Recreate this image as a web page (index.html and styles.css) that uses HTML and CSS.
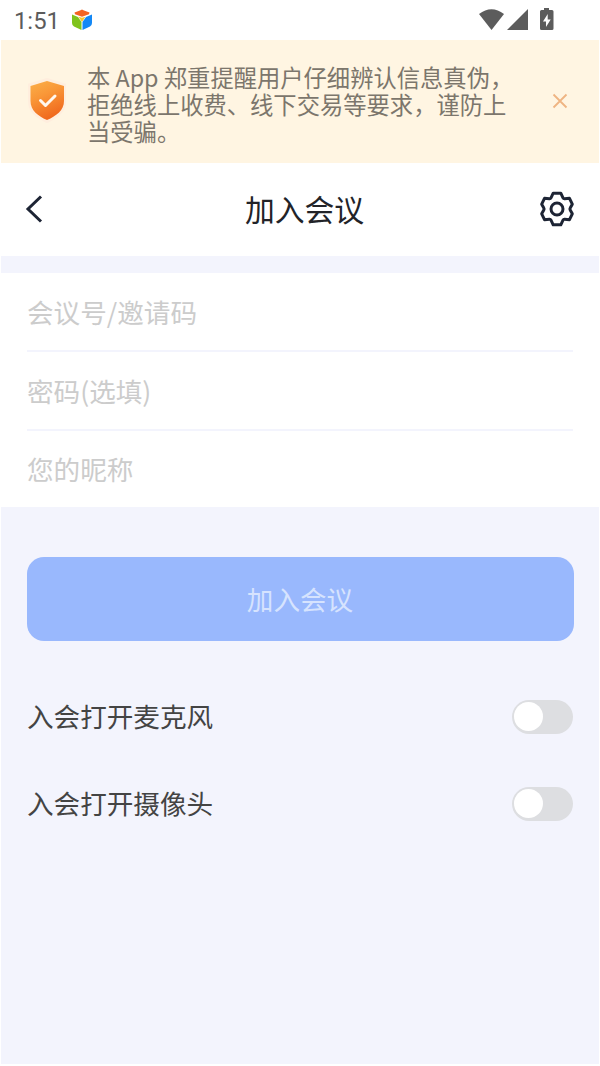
FILE: index.html
```html
<!DOCTYPE html>
<html lang="zh-CN">
<head>
<meta charset="utf-8">
<title>加入会议</title>
<link rel="stylesheet" href="styles.css">
</head>
<body>
<div class="screen">
  <header class="status">
    <span class="clock">1:51</span>
    <svg class="cube" width="22" height="22" viewBox="0 0 22 22">
      <path d="M3.500 3.500 9 1.500 11 .5l2 1 5.500 2L18 5.200 11 7.800 4 5.200Z" fill="#f26322"/>
      <path d="M7.500 7.700 11 8.800l3.500-1.100L11 13Z" fill="#fcc42c"/>
      <path d="M1 5.500 7 8l3.500 5v8L3 17.500Q1 16.500 1 14Z" fill="#7fc31c"/>
      <path d="M21 5.500 15 8l-3.500 5v8L19 17.500Q21 16.500 21 14Z" fill="#1388f5"/>
    </svg>
    <svg class="signals" width="76" height="24" viewBox="0 0 76 24">
      <path d="M0 6Q12.500-3.500 25 6L12.500 22Z"/>
      <path d="M28 22 49 1v21Z"/>
      <path fill-rule="evenodd" d="M65 0h5v2h3q1.500 0 1.500 1.500v17q0 1.500-1.500 1.500H62.500q-1.500 0-1.500-1.500v-17Q61 2 62.500 2H65ZM68.700 6 64 13.500h3V19l4.700-7.500h-3Z"/>
    </svg>
  </header>

  <section class="notice">
    <svg class="shield" width="42" height="50" viewBox="0 0 42 50">
      <defs><linearGradient id="shield-fill" x1="0" y1="0" x2=".4" y2="1"><stop stop-color="#fbb04a"/><stop offset=".45" stop-color="#f99637"/><stop offset="1" stop-color="#f06a1e"/></linearGradient></defs>
      <path d="M21 3 39 8.500v17C39 35.500 31 41.500 21 46 11 41.500 3 35.500 3 25.500v-17Z" fill="#ffeede" stroke="#ffeede" stroke-width="2" stroke-linejoin="round"/>
      <path d="M21 5 38 10v15c0 9-7.500 15-17 19C11.500 40 4.500 34 4.500 25V10Z" fill="url(#shield-fill)"/>
      <path d="m14.500 24.500 5 5 9.500-9.500" fill="none" stroke="#fff8ef" stroke-width="3" stroke-linecap="round" stroke-linejoin="round"/>
    </svg>
    <p class="notice-text">本 App 郑重提醒用户仔细辨认信息真伪，<br>拒绝线上收费、线下交易等要求，谨防上<br>当受骗。</p>
    <svg class="close" width="16" height="16" viewBox="0 0 16 16"><path d="m1.500 1.500 13 13m0-13-13 13"/></svg>
  </section>

  <nav class="titlebar">
    <svg class="line-icon" width="20" height="28" viewBox="0 0 20 28"><path d="M16 1.500 3 14l13 12.500"/></svg>
    <h1 class="title">加入会议</h1>
    <svg class="line-icon" width="36" height="36" viewBox="0 0 36 36">
      <path stroke-linejoin="round" d="M14.200 2.200h7.600L24 6.800Q24.500 7.800 25.600 7.700L30.500 7.300 33.300 13.200 31.200 17Q30.600 18 31.200 19L33.300 22.800 30.500 28.700 25.600 28.300Q24.500 28.200 24 29.200L21.800 33.800H14.200L12 29.200Q11.500 28.200 10.400 28.300L5.500 28.700 2.700 22.800 4.800 19Q5.400 18 4.800 17L2.700 13.200 5.500 7.300 10.400 7.700Q11.500 7.800 12 6.800Z"/>
      <circle cx="18" cy="18" r="6"/>
    </svg>
  </nav>

  <main class="content">
    <div class="fields">
      <div class="field">会议号/邀请码</div>
      <div class="field">密码(选填)</div>
      <div class="field">您的昵称</div>
    </div>
    <button class="join">加入会议</button>
    <div class="option"><span>入会打开麦克风</span><span class="switch"></span></div>
    <div class="option"><span>入会打开摄像头</span><span class="switch"></span></div>
  </main>
</div>
</body>
</html>
```
FILE: styles.css
```css
* { box-sizing: border-box; }
body { margin: 0; background: #fff; }
.screen {
  display: flex;
  flex-direction: column;
  width: 600px;
  height: 1066px;
  padding: 0 1px 2px;
  font-family: "Noto Sans", "Noto Sans CJK SC", sans-serif;
}
.status { display: flex; align-items: center; height: 40px; padding: 0 44px 0 13px; }
.clock { width: 57px; font: 400 23.800px/40px Roboto, sans-serif; color: #5c5c5c; padding-top: 2px; }
.signals { margin-left: auto; fill: #5c5c5c; }
.notice { display: flex; align-items: center; height: 123px; padding: 0 31px 2px 25px; background: #fff5e2; }
.notice-text { margin: 0 0 0 19px; padding-top: 7px; font: 400 23.300px/27px "Noto Sans CJK SC", sans-serif; color: #7c766c; white-space: nowrap; }
.close { margin-left: auto; fill: none; stroke: #efb482; stroke-width: 1.800; }
.titlebar { display: flex; align-items: center; justify-content: space-between; height: 93px; padding: 0 24px 2px; }
.title { margin: 0 0 0 25px; padding-bottom: 2px; font: 400 29.800px/44px "Noto Sans CJK SC", sans-serif; color: #222328; }
.line-icon { fill: none; stroke: #1d2434; stroke-width: 3; }
.content { flex: 1; padding-top: 17px; background: #f3f4fd; }
.fields { height: 234px; padding: 0 26px; background: #fff; }
.field { height: 79px; border-bottom: 2px solid #f3f4fd; font: 400 26.600px/77px "Noto Sans CJK SC", sans-serif; color: #ccc; }
.field:last-child { border: 0; height: 76px; line-height: 76px; }
.join { display: block; width: 547px; height: 84px; margin: 50px 0 32px 26px; padding: 0 1px 0 0; border: 0; border-radius: 17px; background: #99b8fd; color: #d6e3fe; font: 400 26.600px/84px "Noto Sans CJK SC", sans-serif; }
.option { display: flex; align-items: center; justify-content: space-between; height: 87px; padding: 0 26px; font: 400 26.600px/40px "Noto Sans CJK SC", sans-serif; color: #444; }
.option span:first-child { padding-bottom: 2px; }
.switch { display: flex; align-items: center; width: 61px; height: 34px; padding-left: 2px; border-radius: 17px; background: #dddee1; }
.switch::before { content: ""; width: 29px; height: 29px; border-radius: 50%; background: #fff; }
```
